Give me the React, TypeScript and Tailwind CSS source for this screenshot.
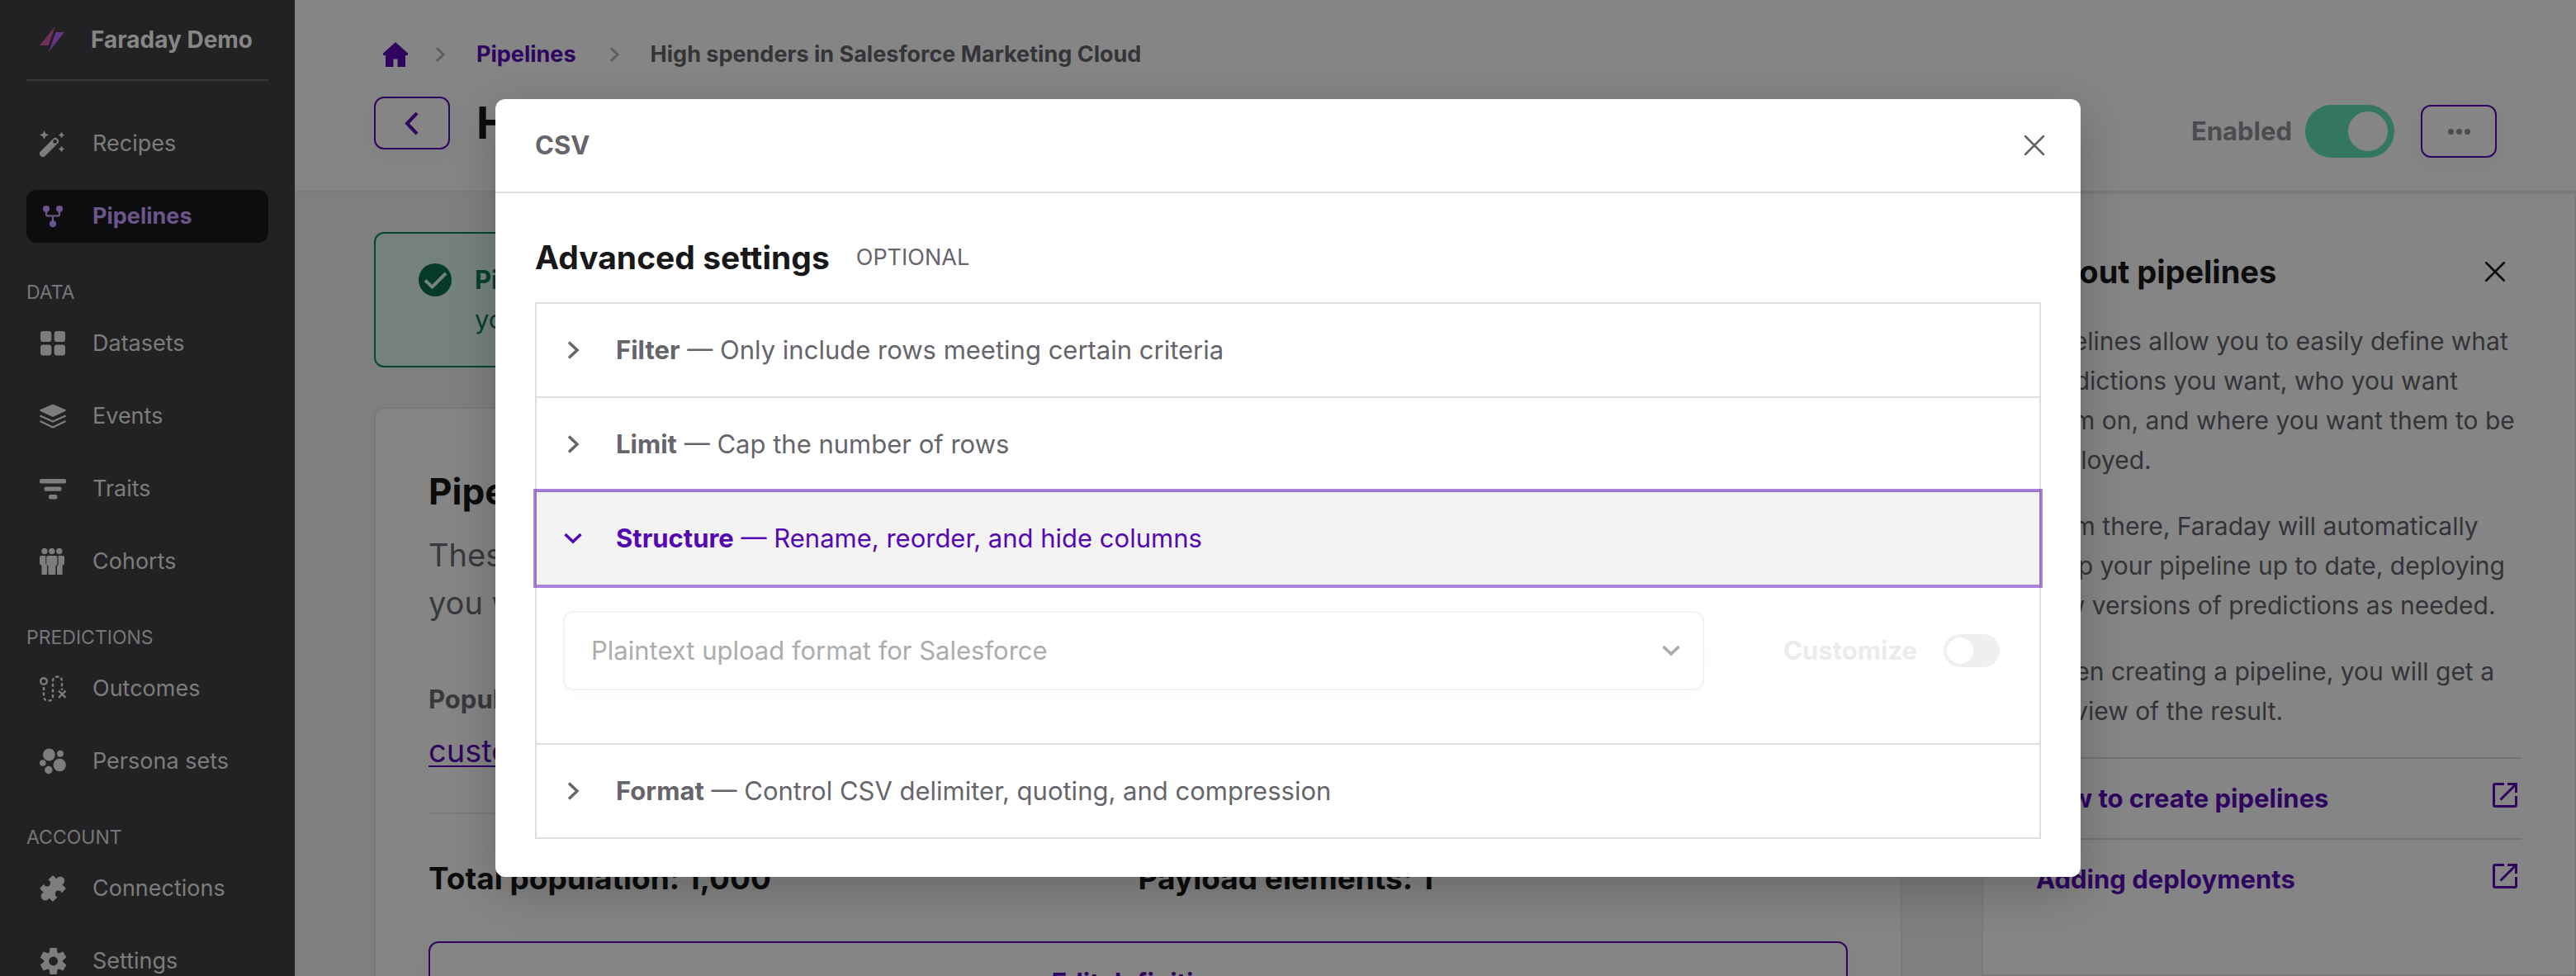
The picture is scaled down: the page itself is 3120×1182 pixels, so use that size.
import type { ReactNode } from "react";

function Icon({ children }: { children: ReactNode }) {
  return (
    <svg viewBox="0 0 32 32" fill="currentColor" className="size-8 shrink-0" aria-hidden="true">
      {children}
    </svg>
  );
}

function Chevron({ d, className }: { d: string; className: string }) {
  return (
    <svg viewBox="0 0 24 24" fill="none" stroke="currentColor" strokeWidth="3.5" className={className} aria-hidden="true">
      <path d={d} />
    </svg>
  );
}

const RIGHT = "M7 2.5 17 12 7 21.5";
const LEFT = "M18 0 6 12.5 18 25";
const DOWN = "M2.5 7 12 16 21.5 7";

const recipes = (
  <Icon>
    <path d="M4 28 19 13" stroke="currentColor" strokeWidth="8" strokeLinecap="round" />
    <circle cx="18.6" cy="13.4" r="2.3" fill="#222224" />
    <path d="M5.5 0 7.2 3.8 11 5.5 7.2 7.2 5.5 11 3.8 7.2 0 5.5 3.8 3.8Z" />
    <path d="M26.5 1.7 27.8 4.2 30.3 5.5 27.8 6.8 26.5 9.3 25.2 6.8 22.7 5.5 25.2 4.2Z" />
    <path d="M26.5 18.7 27.8 21.2 30.3 22.5 27.8 23.8 26.5 26.3 25.2 23.8 22.7 22.5 25.2 21.2Z" />
  </Icon>
);

const pipelines = (
  <Icon>
    <circle cx="8" cy="7" r="4" />
    <circle cx="24" cy="7" r="4" />
    <circle cx="16" cy="25" r="4" />
    <path d="M8 8v6q0 1.4 1.4 1.4h13.2q1.4 0 1.4-1.4V8M16 15.4V24" fill="none" stroke="currentColor" strokeWidth="2.2" />
  </Icon>
);

const datasets = (
  <Icon>
    <rect x="1" y="1" width="13.3" height="13" rx="3" />
    <rect x="17.7" y="1" width="13.3" height="13" rx="3" />
    <rect x="1" y="17.5" width="13.3" height="13" rx="3" />
    <rect x="17.7" y="17.5" width="13.3" height="13" rx="3" />
  </Icon>
);

const events = (
  <Icon>
    <path d="M16 1.5 31 8q1.6 1 0 2L16 17 1 10q-1.6-1 0-2Z" />
    <path d="M.5 15.5 16 22.5 31.5 15.5M.5 22 16 29.5 31.5 22" fill="none" stroke="currentColor" strokeWidth="2.2" />
  </Icon>
);

const traits = (
  <Icon>
    <rect x="0" y="4" width="32" height="5.4" rx="2" />
    <rect x="5.5" y="13.4" width="21" height="5.4" rx="2" />
    <rect x="11" y="23" width="10.4" height="5.4" rx="2" />
  </Icon>
);

const cohorts = (
  <Icon>
    <circle cx="5.9" cy="3.6" r="3.7" />
    <circle cx="14.8" cy="3.6" r="3.7" />
    <circle cx="23.8" cy="3.6" r="3.7" />
    <path d="M2 9h5.3v9.5L9 21v10a1 1 0 0 1-1 1H3.4a1 1 0 0 1-1-1V21L0 19V11a2 2 0 0 1 2-2Z" />
    <path d="M10.2 9h9.2a2 2 0 0 1 2 2v9l-2 1v10a1 1 0 0 1-1 1h-7a1 1 0 0 1-1-1V21l-2.2-1v-9a2 2 0 0 1 2-2Z" />
    <path d="M22.6 9H28a2 2 0 0 1 2 2v8l-2.4 2v10a1 1 0 0 1-1 1H22a1 1 0 0 1-1-1V21.600l1.600-2Z" />
  </Icon>
);

const outcomes = (
  <Icon>
    <g fill="none" stroke="currentColor" strokeWidth="2.4">
      <circle cx="5" cy="7" r="3.8" />
      <path d="M5 14v11q0 5.500 5.500 5.500T16 25V7q0-5.500 5.500-5.500T27 7v11" strokeDasharray="4 2.600" />
      <path d="m23 18.500 8.500 8.500m0-8.500L23 27" />
    </g>
  </Icon>
);

const personas = (
  <Icon>
    <circle cx="11.4" cy="8" r="7.400" />
    <circle cx="25" cy="6.800" r="4" />
    <circle cx="3.800" cy="18" r="3.800" />
    <circle cx="24.200" cy="20.500" r="7.700" />
    <circle cx="10.800" cy="26.500" r="4.700" />
  </Icon>
);

const connections = (
  <Icon>
    <path d="M16 2 30 16 16 30 2 16Z" stroke="currentColor" strokeWidth="3" strokeLinejoin="round" />
    <circle cx="25" cy="6.800" r="5.200" />
    <circle cx="6.900" cy="25.200" r="5.200" />
    <circle cx="9" cy="9.500" r="3.900" fill="#222224" />
    <circle cx="6.500" cy="7" r="2.500" fill="#222224" />
    <circle cx="22.800" cy="22.500" r="3.900" fill="#222224" />
    <circle cx="25.300" cy="25" r="2.500" fill="#222224" />
  </Icon>
);

const settings = (
  <Icon>
    <circle cx="16.600" cy="16" r="11.400" />
    <path d="M12.600 0h8l1.200 7v18l-1.200 7h-8l-1.200-7V7Z" />
    <path d="M12.600 0h8l1.200 7v18l-1.200 7h-8l-1.200-7V7Z" transform="rotate(60 16.600 16)" />
    <path d="M12.600 0h8l1.200 7v18l-1.200 7h-8l-1.200-7V7Z" transform="rotate(120 16.600 16)" />
    <circle cx="16.600" cy="16" r="5.400" fill="#222224" />
  </Icon>
);

type Item = { label: string; icon: ReactNode; active?: boolean };

const groups: { title?: string; items: Item[] }[] = [
  { items: [{ label: "Recipes", icon: recipes }, { label: "Pipelines", icon: pipelines, active: true }] },
  {
    title: "DATA",
    items: [
      { label: "Datasets", icon: datasets },
      { label: "Events", icon: events },
      { label: "Traits", icon: traits },
      { label: "Cohorts", icon: cohorts },
    ],
  },
  { title: "PREDICTIONS", items: [{ label: "Outcomes", icon: outcomes }, { label: "Persona sets", icon: personas }] },
  { title: "ACCOUNT", items: [{ label: "Connections", icon: connections }, { label: "Settings", icon: settings }] },
];

function Sidebar() {
  return (
    <aside className="flex w-[357px] shrink-0 flex-col overflow-hidden bg-[#222224] px-8 text-[27px] text-[#7d7d7d]">
      <div className="flex h-[98px] shrink-0 items-center gap-8 border-b-2 border-[#38383a] pl-4 text-[28px] text-[#868686]">
        <svg viewBox="0 0 30 32" className="h-8 w-[30px]" aria-hidden="true">
          <path d="M18.700 0 0 23h10.700Z" fill="#753058" />
          <path d="M19.700 7H30L11 30.700Z" fill="#633485" />
        </svg>
        <span className="font-bold whitespace-nowrap">Faraday Demo</span>
      </div>
      <nav className="mt-11 shrink-0">
        {groups.map((g, i) => (
          <section key={i}>
            {g.title && <h2 className="mt-[42px] mb-3 h-9 text-[23px] leading-9 text-[#777779]">{g.title}</h2>}
            <ul className="flex flex-col gap-6">
              {g.items.map((it) => (
                <li key={it.label}>
                  <a
                    href="#"
                    className={
                      it.active
                        ? "flex h-16 items-center gap-8 rounded-xl bg-[#0d0d0f] px-4 font-bold text-[#6b558a]"
                        : "flex h-16 items-center gap-8 rounded-xl px-4"
                    }
                  >
                    {it.icon}
                    <span className="whitespace-nowrap">{it.label}</span>
                  </a>
                </li>
              ))}
            </ul>
          </section>
        ))}
      </nav>
    </aside>
  );
}

function Header() {
  return (
    <header className="flex shrink-0 justify-between border-b-2 border-[#7a7a7a] bg-[#858585] px-24">
      <div className="pt-[42px] pb-[50px]">
        <nav aria-label="Breadcrumb" className="flex h-12 items-center text-[27px] font-bold whitespace-nowrap text-[#353439]">
          <a href="#" aria-label="Home" className="ml-2.5 text-[#2f0560]">
            <svg viewBox="0 0 32 32" fill="currentColor" className="size-8">
              <path d="M16 1 31 14.500V17H28v14H18.500V21.500h-5V31H4V17H1v-2.500Z" />
            </svg>
          </a>
          <Chevron d={RIGHT} className="ml-7 size-5 text-[#5d5d5f]" />
          <a href="#" className="ml-8.5 text-[#2f0560]">Pipelines</a>
          <Chevron d={RIGHT} className="ml-9 size-5 text-[#5d5d5f]" />
          <span className="ml-8.5">High spenders in Salesforce Marketing Cloud</span>
        </nav>
        <div className="mt-[27px] flex h-16 items-center gap-8">
          <button aria-label="Back" className="flex h-16 w-[92px] items-center justify-center rounded-xl border-2 border-[#2f0560] text-[#2f0560] shadow-[0_8px_32px_rgba(0,0,0,0.03)]">
            <Chevron d={LEFT} className="size-6 overflow-visible stroke-[4]" />
          </button>
          <h1 className="text-[54px] leading-16 font-bold whitespace-nowrap text-[#0c0c0d]">
            High spenders in Salesforce Marketing Cloud
          </h1>
        </div>
      </div>
      <div className="mb-10 flex items-center gap-8 self-end">
        <label className="flex items-center gap-4 text-[31px] font-bold text-[#4c4b50]">
          Enabled
          <input
            type="checkbox"
            role="switch"
            defaultChecked
            className="flex h-16 w-27 appearance-none items-center justify-end rounded-full bg-[#34775f] px-2 before:size-12 before:rounded-full before:bg-[#858585]"
          />
        </label>
        <button aria-label="More actions" className="flex h-16 w-[92px] items-center justify-center gap-[3px] rounded-xl border-2 border-[#2f0560] shadow-[0_8px_32px_rgba(0,0,0,0.03)]">
          <span className="size-[7px] rounded-full bg-[#4c4b50]" />
          <span className="size-[7px] rounded-full bg-[#4c4b50]" />
          <span className="size-[7px] rounded-full bg-[#4c4b50]" />
        </button>
      </div>
    </header>
  );
}

function Definition() {
  return (
    <main className="min-w-0 flex-1 overflow-hidden pt-12 pr-24 pl-24">
      <div role="status" className="flex gap-7 rounded-xl border-2 border-[#064630] bg-[#75827c] px-13 py-8 text-[31px] leading-12 text-[#06402f]">
        <svg viewBox="0 0 40 40" className="mt-1 size-10 shrink-0" aria-hidden="true">
          <circle cx="20" cy="20" r="20" fill="#053a2a" />
          <path d="m8 20.500 8.500 8L33 12" fill="none" stroke="#75827c" strokeWidth="4" />
        </svg>
        <p>
          <b className="block">Pipeline is enabled.</b>
          <span className="block">you can deploy its predictions.</span>
        </p>
      </div>
      <section className="mt-12 rounded-xl border-2 border-[#7a7a7a] bg-[#858585] px-16 pt-[70px] pb-16">
        <h2 className="text-[44px] leading-15 font-bold text-[#0c0c0d]">Pipeline definition</h2>
        <p className="mt-[18px] text-[38px] leading-[58px] text-[#39383d]">
          <span className="block">These are the predictions this pipeline makes.</span>
          <span className="block">you will be able to deploy them below.</span>
        </p>
        <h3 className="mt-16 text-[31px] leading-12 font-bold text-[#39383d]">Population to include</h3>
        <a href="#" className="mt-2 block text-[38px] leading-15 text-[#2f0560] underline decoration-2 underline-offset-4">customers</a>
        <div className="mt-[45px] grid grid-cols-2 border-t-2 border-[#7a7a7a] pt-[54px] text-[37px] leading-12 font-bold text-[#0c0c0d]">
          <p>Total population: 1,000</p>
          <p>Payload elements: 1</p>
        </div>
        <button className="mt-13 flex h-25 w-full items-center justify-center rounded-xl border-2 border-[#2f0560] text-[31px] font-bold text-[#2f0560] shadow-[0_8px_32px_rgba(0,0,0,0.03)]">
          Edit definition
        </button>
      </section>
    </main>
  );
}

function Close({ className }: { className: string }) {
  return (
    <svg viewBox="0 0 24 24" fill="none" stroke="currentColor" strokeWidth="2.600" strokeLinecap="round" className={className} aria-hidden="true">
      <path d="m1 1 22 22M23 1 1 23" />
    </svg>
  );
}

function HelpPanel() {
  return (
    <aside className="w-[720px] shrink-0 border-2 border-[#7a7a7a] bg-[#858585] px-16 pt-[70px] text-[30px] leading-12 text-[#343338]">
      <div className="flex items-center justify-between pr-5 text-[#0c0c0d]">
        <h2 className="text-[38px] leading-12 font-bold whitespace-nowrap">About pipelines</h2>
        <button aria-label="Close help"><Close className="size-6" /></button>
      </div>
      <div className="mt-9 flex flex-col gap-8 whitespace-nowrap">
        <p>
          Pipelines allow you to easily define what<br />predictions you want, who you want<br />them on, and where you want them to be<br />deployed.
        </p>
        <p>
          From there, Faraday will automatically<br />keep your pipeline up to date, deploying<br />new versions of predictions as needed.
        </p>
        <p>
          When creating a pipeline, you will get a<br />preview of the result.
        </p>
      </div>
      <ul className="mt-8 text-[31px] font-bold text-[#2f0560]">
        {["How to create pipelines", "Adding deployments"].map((t) => (
          <li key={t} className="border-t-2 border-[#737373]">
            <a href="#" className="flex h-24 items-center justify-between pr-1">
              {t}
              <svg viewBox="0 0 32 32" fill="none" stroke="currentColor" strokeWidth="3" className="mb-2 size-8" aria-hidden="true">
                <path d="M15 2.500H4q-1.500 0-1.500 1.500v24q0 1.500 1.500 1.500h24q1.500 0 1.500-1.500V17M19 2.500h10.500V13M29 3 10.500 21.500" />
              </svg>
            </a>
          </li>
        ))}
      </ul>
    </aside>
  );
}

function Row({ name, text, last }: { name: string; text: string; last?: boolean }) {
  return (
    <button
      className={
        last
          ? "flex h-28 w-full items-center gap-10 px-8 text-left whitespace-nowrap text-[#66656b]"
          : "flex h-[114px] w-full items-center gap-10 border-b-2 border-[#dededf] px-8 text-left whitespace-nowrap text-[#66656b]"
      }
    >
      <Chevron d={RIGHT} className="size-6" />
      <span>
        <b>{name}</b> — {text}
      </span>
    </button>
  );
}

function CsvDialog() {
  return (
    <div className="absolute inset-0 flex items-center justify-center">
      <div
        role="dialog"
        aria-label="CSV"
        className="w-full max-w-[1920px] rounded-xl bg-white text-[31px] text-[#66656b] shadow-[0_16px_56px_rgba(0,0,0,0.22)]"
      >
        <header className="flex h-[114px] items-center justify-between border-b-2 border-[#dededf] pr-11 pl-12">
          <h2 className="font-bold">CSV</h2>
          <button aria-label="Close"><Close className="size-6" /></button>
        </header>
        <div className="px-12 pt-12 pb-[46px]">
          <div className="flex items-center gap-8">
            <h3 className="text-[39px] leading-15 font-bold text-[#18181a]">Advanced settings</h3>
            <span className="text-[27px]">OPTIONAL</span>
          </div>
          <div className="mt-6 border-2 border-[#dededf]">
            <Row name="Filter" text="Only include rows meeting certain criteria" />
            <Row name="Limit" text="Cap the number of rows" />
            <button aria-expanded="true" className="relative flex h-28 w-full items-center gap-10 bg-[#f3f3f3] px-8 text-left whitespace-nowrap text-[#5508b2] outline-4 outline-[#5508b2]/50">
              <Chevron d={DOWN} className="size-6" />
              <span>
                <b>Structure</b> — Rename, reorder, and hide columns
              </span>
            </button>
            <div className="flex items-center gap-24 border-b-2 border-[#dededf] px-8 pt-8 pb-16">
              <div className="relative flex-1">
                <select
                  disabled
                  aria-label="Format"
                  className="h-24 w-full appearance-none rounded-xl border-2 border-[#f2f2f2] bg-white px-8 text-[#acacac] opacity-100 shadow-[0_8px_32px_rgba(0,0,0,0.01)]"
                >
                  <option>Plaintext upload format for Salesforce</option>
                </select>
                <Chevron d={DOWN} className="absolute top-9 right-7 size-6 text-[#acacac]" />
              </div>
              <label className="mr-4 flex items-center gap-8 font-bold text-[#ebebed]">
                Customize
                <input
                  type="checkbox"
                  role="switch"
                  disabled
                  className="flex h-10 w-17 appearance-none items-center rounded-full bg-[#efefef] px-1 before:size-8 before:rounded-full before:bg-white"
                />
              </label>
            </div>
            <Row name="Format" text="Control CSV delimiter, quoting, and compression" last />
          </div>
        </div>
      </div>
    </div>
  );
}

export default function App() {
  return (
    <div className="relative flex h-screen overflow-hidden bg-[#7f7f7f] font-['Inter',sans-serif]">
      <Sidebar />
      <div className="flex min-w-0 flex-1 flex-col">
        <Header />
        <div className="flex min-h-0 flex-1">
          <Definition />
          <HelpPanel />
        </div>
      </div>
      <CsvDialog />
    </div>
  );
}
